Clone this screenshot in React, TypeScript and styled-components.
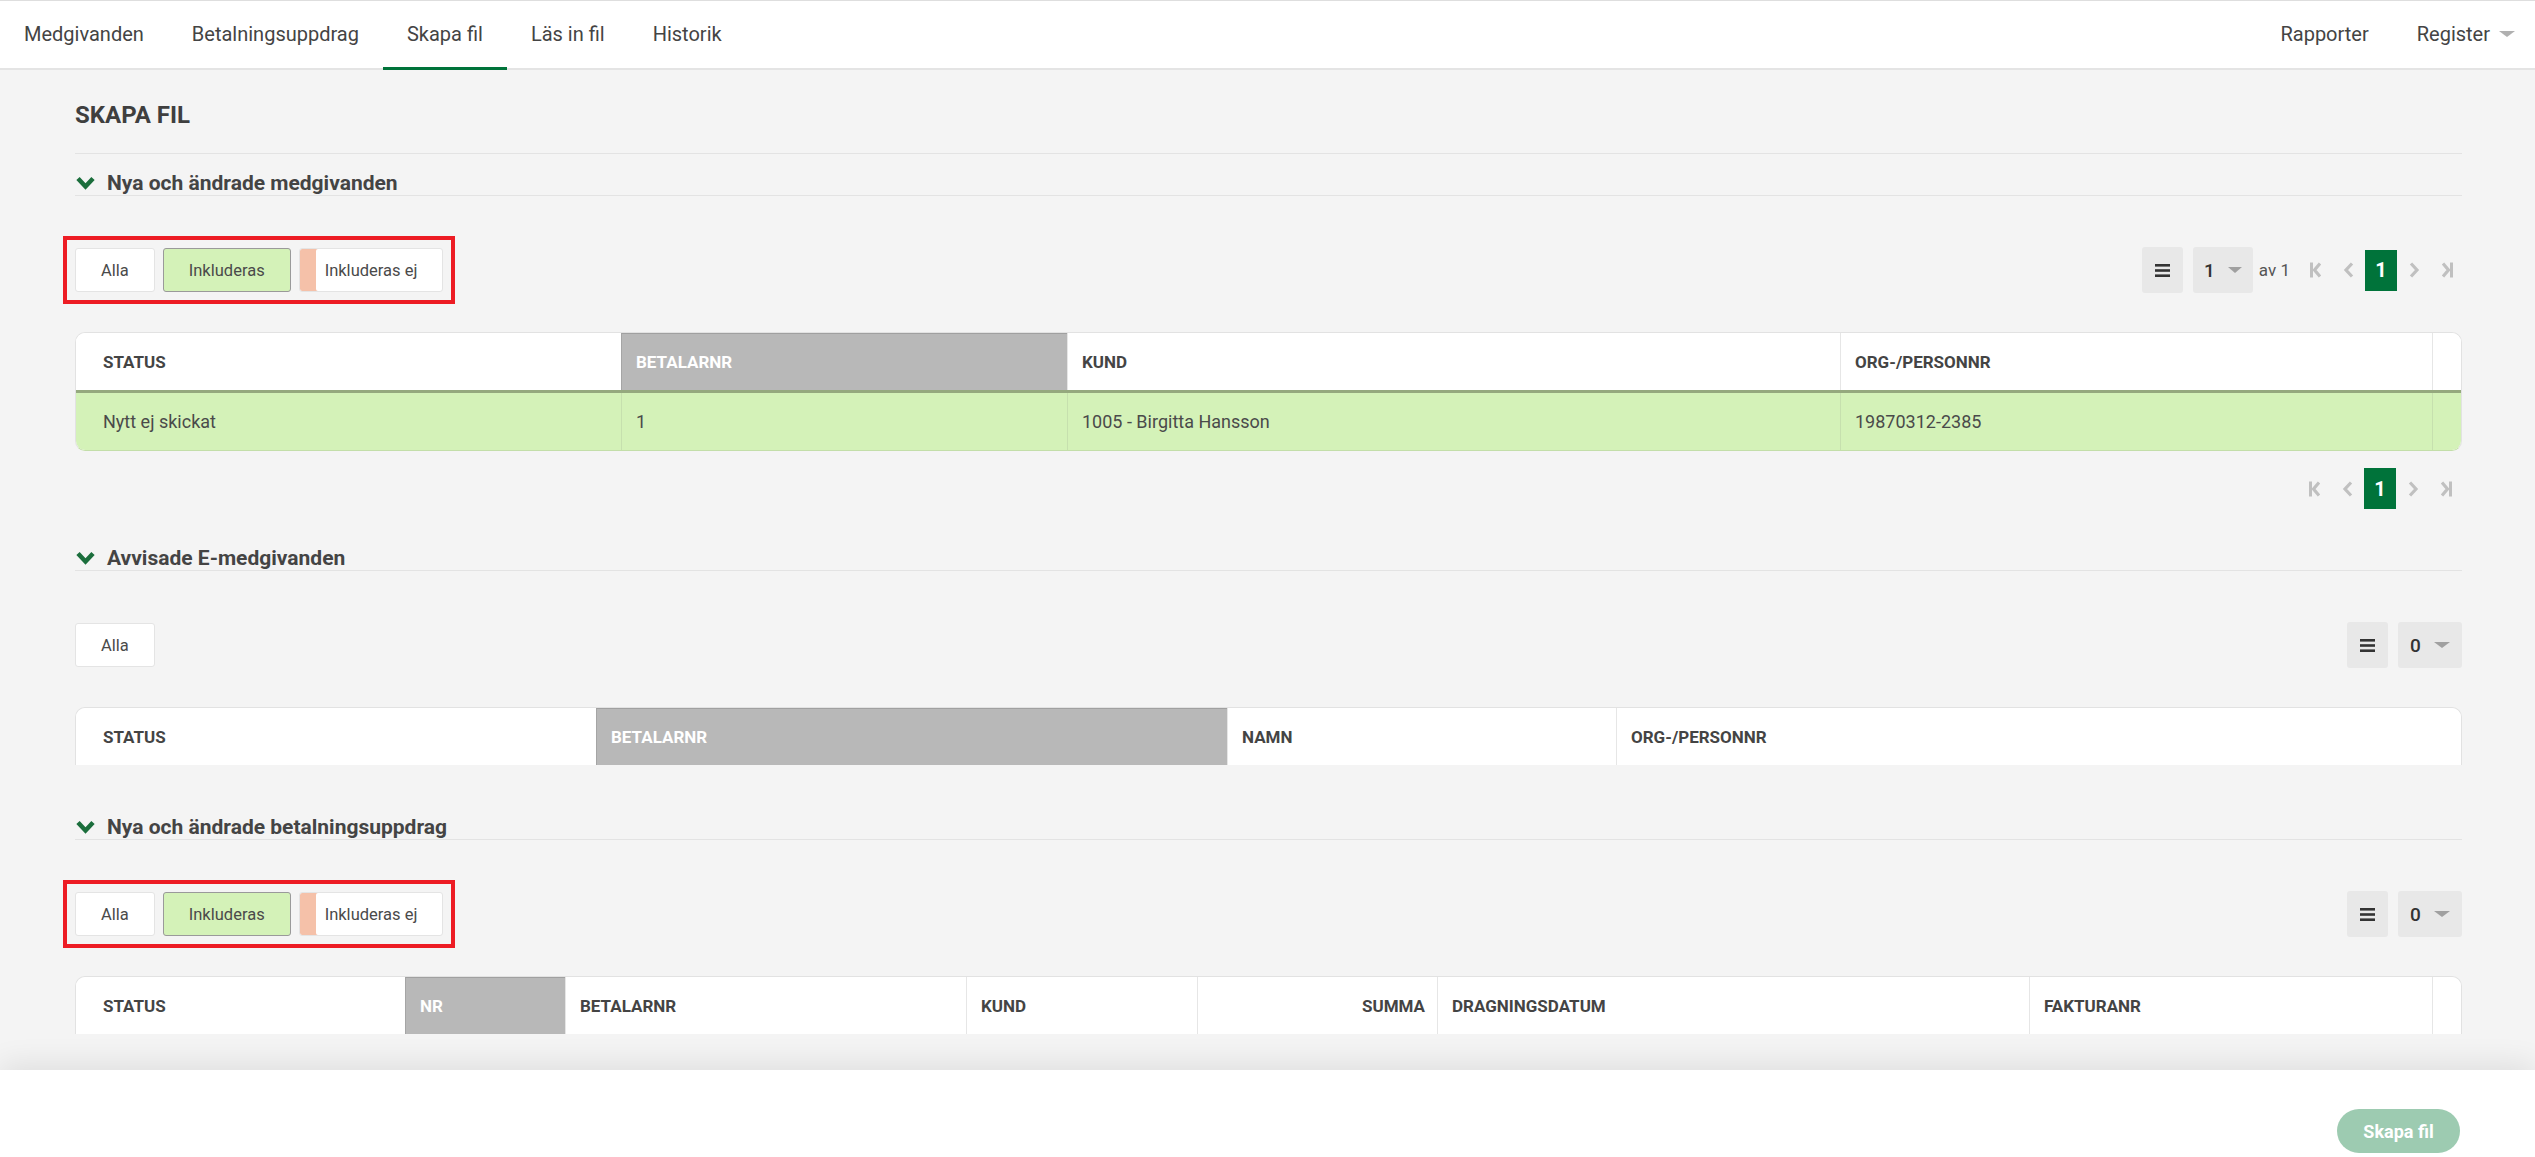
import React from "react";
import styled, { createGlobalStyle } from "styled-components";

const Global = createGlobalStyle`
  html, body { margin: 0; padding: 0; height: 100%; }
  body {
    background: #f4f4f4;
    font-family: Roboto, "Liberation Sans", sans-serif;
    color: #444;
    overflow: hidden;
  }
  #root { height: 100%; }
  * { box-sizing: border-box; }
`;

const Shell = styled.div`
  height: 100vh;
  display: flex;
  flex-direction: column;
`;

const TopBar = styled.header`
  height: 70px;
  flex-shrink: 0;
  background: #fff;
  border-top: 1px solid #dedede;
  border-bottom: 2px solid #e4e4e4;
  display: flex;
  justify-content: space-between;
  align-items: stretch;
`;

const NavGroup = styled.nav`
  display: flex;
  align-items: stretch;
`;

const NavTab = styled.a<{ $active?: boolean; $last?: boolean }>`
  display: flex;
  align-items: center;
  padding: 0 ${(p) => (p.$last ? "20px" : "24px")} 0 24px;
  margin-bottom: -2px;
  font-size: 20px;
  color: #444;
  text-decoration: none;
  border-bottom: 3px solid ${(p) => (p.$active ? "#00733a" : "transparent")};
  cursor: pointer;
`;

const Caret = styled.span<{ $size?: number; $color?: string }>`
  display: inline-block;
  width: 0;
  height: 0;
  border-left: ${(p) => (p.$size ?? 8)}px solid transparent;
  border-right: ${(p) => (p.$size ?? 8)}px solid transparent;
  border-top: ${(p) => Math.round((p.$size ?? 8) * 0.8)}px solid ${(p) => p.$color ?? "#a9a9a9"};
  margin-left: 9px;
`;

const Main = styled.main`
  flex: 1;
  overflow: hidden;
  padding: 0 73px 0 75px;
`;

const PageTitle = styled.h1`
  margin: 0;
  padding: 31px 0 24px;
  font-size: 24px;
  line-height: 28px;
  font-weight: 700;
  color: #3f3f3f;
  border-bottom: 1px solid #e3e3e3;
`;

const Section = styled.section<{ $top: number }>`
  margin-top: ${(p) => p.$top}px;
  display: flex;
  flex-direction: column;
`;

const SectionHeader = styled.h2`
  margin: 0;
  display: flex;
  align-items: center;
  gap: 12px;
  font-size: 21px;
  line-height: 24px;
  font-weight: 700;
  color: #444;
  border-bottom: 1px solid #e3e3e3;
  padding-left: 1px;
`;

const Toolbar = styled.div`
  margin-top: 51px;
  height: 46px;
  display: flex;
  align-items: center;
  justify-content: space-between;
`;

const FilterGroup = styled.div<{ $marked?: boolean }>`
  display: flex;
  gap: 8px;
  outline: ${(p) => (p.$marked ? "4px solid #ed1c24" : "none")};
  outline-offset: 8px;
`;

const FilterButton = styled.button<{ $variant?: "plain" | "on" | "off" }>`
  height: 44px;
  padding: 0 25px;
  font-family: Roboto, "Liberation Sans", sans-serif;
  font-size: 16.5px;
  color: #4a4a4a;
  border-radius: 3px;
  cursor: pointer;
  background: ${(p) => (p.$variant === "on" ? "#d4f2b8" : "#fff")};
  border: 1px solid ${(p) => (p.$variant === "on" ? "#9a9a9a" : "#e4e4e4")};
  box-shadow: ${(p) => (p.$variant === "off" ? "inset 16px 0 0 #f5c1a9" : "none")};
`;

const Controls = styled.div`
  display: flex;
  align-items: center;
  gap: 10px;
`;

const GreyButton = styled.button<{ $w: number }>`
  width: ${(p) => p.$w}px;
  height: 46px;
  border: none;
  border-radius: 3px;
  background: #e8e8e8;
  display: flex;
  align-items: center;
  justify-content: center;
  gap: 4px;
  font-family: Roboto, "Liberation Sans", sans-serif;
  font-size: 19px;
  font-weight: 500;
  color: #333;
  padding: 0;
`;

const PageOf = styled.span`
  font-size: 17px;
  color: #555;
  margin: 0 -1px 0 -4px;
`;

const Pager = styled.div<{ $standalone?: boolean }>`
  display: flex;
  align-items: center;
  gap: 1px;
  justify-content: flex-end;
  margin-top: ${(p) => (p.$standalone ? "17px" : "0")};
  margin-right: ${(p) => (p.$standalone ? "0" : "-1px")};
`;

const PageBtn = styled.span<{ $active?: boolean }>`
  width: 32px;
  height: 41px;
  display: flex;
  align-items: center;
  justify-content: center;
  background: ${(p) => (p.$active ? "#00733a" : "transparent")};
  color: ${(p) => (p.$active ? "#fff" : "#c0c0c0")};
  font-size: 20px;
  font-weight: 700;
`;

const Table = styled.div<{ $open?: boolean }>`
  margin-top: 39px;
  background: #fff;
  border: 1px solid #e2e2e2;
  border-bottom: ${(p) => (p.$open ? "none" : "1px solid #c3dea9")};
  border-radius: ${(p) => (p.$open ? "10px 10px 0 0" : "10px")};
  overflow: hidden;
`;

const Row = styled.div<{ $cols: string; $body?: boolean }>`
  display: grid;
  grid-template-columns: ${(p) => p.$cols};
  height: ${(p) => (p.$body ? "60px" : "57px")};
  background: ${(p) => (p.$body ? "#d4f2b8" : "#fff")};
  border-top: ${(p) => (p.$body ? "3px solid #95a97e" : "none")};
`;

const HeadCell = styled.div<{ $sorted?: boolean; $first?: boolean; $right?: boolean }>`
  display: flex;
  align-items: center;
  justify-content: ${(p) => (p.$right ? "flex-end" : "flex-start")};
  padding: 0 ${(p) => (p.$right ? "12px" : "14px")} 0 ${(p) => (p.$first ? "26px" : "14px")};
  font-size: 17px;
  font-weight: 700;
  text-transform: uppercase;
  color: ${(p) => (p.$sorted ? "#fff" : "#444")};
  background: ${(p) => (p.$sorted ? "#b8b8b8" : "transparent")};
  border-left: 1px solid ${(p) => (p.$first ? "transparent" : p.$sorted ? "#a5a5a5" : "#e6e6e6")};
  ${(p) => (p.$sorted ? "border-top: 1px solid #a0a0a0;" : "")}
`;

const BodyCell = styled.div<{ $first?: boolean }>`
  display: flex;
  align-items: center;
  padding: 0 14px 0 ${(p) => (p.$first ? "26px" : "14px")};
  font-size: 18px;
  color: #4a4a4a;
  border-left: 1px solid ${(p) => (p.$first ? "transparent" : "#c6e0ae")};
`;

const Footer = styled.footer`
  height: 87px;
  flex-shrink: 0;
  position: relative;
  z-index: 2;
  background: #fff;
  box-shadow: 0 -6px 30px rgba(0, 0, 0, 0.09);
  display: flex;
  justify-content: flex-end;
  align-items: flex-start;
  padding: 39px 75px 0 0;
`;

const PrimaryButton = styled.button`
  width: 123px;
  height: 44px;
  border: none;
  border-radius: 22px;
  background: #9dcbb1;
  color: #fff;
  font-family: Roboto, "Liberation Sans", sans-serif;
  font-size: 18px;
  font-weight: 700;
`;

/* icons */
const Chevron = () => (
  <svg width="19" height="14" viewBox="0 0 19 14">
    <path d="M2 2.5 L9.5 10.5 L17 2.5" fill="none" stroke="#1b6e3c" strokeWidth="4.5" />
  </svg>
);

const Hamburger = () => (
  <svg width="15" height="13" viewBox="0 0 15 13">
    <rect x="0" y="0" width="15" height="2.6" fill="#333" />
    <rect x="0" y="5.2" width="15" height="2.6" fill="#333" />
    <rect x="0" y="10.4" width="15" height="2.6" fill="#333" />
  </svg>
);

const FirstIcon = () => (
  <svg width="11" height="16" viewBox="0 0 11 16">
    <rect x="0" y="0.5" width="3" height="15" fill="currentColor" />
    <path d="M10 1.5 L4.5 8 L10 14.5" fill="none" stroke="currentColor" strokeWidth="3.2" />
  </svg>
);
const PrevIcon = () => (
  <svg width="11" height="16" viewBox="0 0 11 16">
    <path d="M9 1.5 L3 8 L9 14.5" fill="none" stroke="currentColor" strokeWidth="3.2" />
  </svg>
);
const NextIcon = () => (
  <svg width="11" height="16" viewBox="0 0 11 16">
    <path d="M2 1.5 L8 8 L2 14.5" fill="none" stroke="currentColor" strokeWidth="3.2" />
  </svg>
);
const LastIcon = () => (
  <svg width="11" height="16" viewBox="0 0 11 16">
    <path d="M1 1.5 L6.5 8 L1 14.5" fill="none" stroke="currentColor" strokeWidth="3.2" />
    <rect x="8" y="0.5" width="3" height="15" fill="currentColor" />
  </svg>
);

const PagerNav = ({ standalone }: { standalone?: boolean }) => (
  <Pager $standalone={standalone}>
    <PageBtn><FirstIcon /></PageBtn>
    <PageBtn><PrevIcon /></PageBtn>
    <PageBtn $active>1</PageBtn>
    <PageBtn><NextIcon /></PageBtn>
    <PageBtn><LastIcon /></PageBtn>
  </Pager>
);

type Col = { label: string; width: number | string; sorted?: boolean; right?: boolean };

const DataTable = ({ cols, rows, open }: { cols: Col[]; rows: string[][]; open?: boolean }) => {
  const template = cols.map((c) => (typeof c.width === "number" ? `${c.width}px` : c.width)).join(" ");
  return (
    <Table $open={open}>
      <Row $cols={template}>
        {cols.map((c, i) => (
          <HeadCell key={i} $first={i === 0} $sorted={c.sorted} $right={c.right}>
            {c.label}
          </HeadCell>
        ))}
      </Row>
      {rows.map((r, ri) => (
        <Row key={ri} $cols={template} $body>
          {cols.map((_, i) => (
            <BodyCell key={i} $first={i === 0}>{r[i] ?? ""}</BodyCell>
          ))}
        </Row>
      ))}
    </Table>
  );
};

const Filters = () => (
  <FilterGroup $marked>
    <FilterButton $variant="plain">Alla</FilterButton>
    <FilterButton $variant="on">Inkluderas</FilterButton>
    <FilterButton $variant="off">Inkluderas ej</FilterButton>
  </FilterGroup>
);

const SizeControls = ({ count }: { count: string }) => (
  <Controls>
    <GreyButton $w={41}><Hamburger /></GreyButton>
    <GreyButton $w={64}>
      {count}
      <Caret $size={8} $color="#a0a0a0" />
    </GreyButton>
  </Controls>
);

export default function App() {
  return (
    <Shell>
      <Global />
      <TopBar>
        <NavGroup>
          <NavTab>Medgivanden</NavTab>
          <NavTab>Betalningsuppdrag</NavTab>
          <NavTab $active>Skapa fil</NavTab>
          <NavTab>Läs in fil</NavTab>
          <NavTab>Historik</NavTab>
        </NavGroup>
        <NavGroup>
          <NavTab>Rapporter</NavTab>
          <NavTab $last>
            Register
            <Caret $size={8} $color="#b0b0b0" />
          </NavTab>
        </NavGroup>
      </TopBar>

      <Main>
        <PageTitle>SKAPA FIL</PageTitle>

        <Section $top={17}>
          <SectionHeader>
            <Chevron />
            Nya och ändrade medgivanden
          </SectionHeader>
          <Toolbar>
            <Filters />
            <Controls>
              <GreyButton $w={41}><Hamburger /></GreyButton>
              <GreyButton $w={60}>
                1
                <Caret $size={7} $color="#a0a0a0" />
              </GreyButton>
              <PageOf>av 1</PageOf>
              <PagerNav />
            </Controls>
          </Toolbar>
          <DataTable
            cols={[
              { label: "Status", width: 545 },
              { label: "Betalarnr", width: 446, sorted: true },
              { label: "Kund", width: 773 },
              { label: "Org-/Personnr", width: 592 },
              { label: "", width: "1fr" },
            ]}
            rows={[["Nytt ej skickat", "1", "1005 - Birgitta Hansson", "19870312-2385", ""]]}
          />
          <PagerNav standalone />
        </Section>

        <Section $top={37}>
          <SectionHeader>
            <Chevron />
            Avvisade E-medgivanden
          </SectionHeader>
          <Toolbar>
            <FilterGroup>
              <FilterButton $variant="plain">Alla</FilterButton>
            </FilterGroup>
            <SizeControls count="0" />
          </Toolbar>
          <DataTable
            open
            cols={[
              { label: "Status", width: 520 },
              { label: "Betalarnr", width: 631, sorted: true },
              { label: "Namn", width: 389 },
              { label: "Org-/Personnr", width: "1fr" },
            ]}
            rows={[]}
          />
        </Section>

        <Section $top={50}>
          <SectionHeader>
            <Chevron />
            Nya och ändrade betalningsuppdrag
          </SectionHeader>
          <Toolbar>
            <Filters />
            <SizeControls count="0" />
          </Toolbar>
          <DataTable
            open
            cols={[
              { label: "Status", width: 329 },
              { label: "Nr", width: 160, sorted: true },
              { label: "Betalarnr", width: 401 },
              { label: "Kund", width: 231 },
              { label: "Summa", width: 240, right: true },
              { label: "Dragningsdatum", width: 592 },
              { label: "Fakturanr", width: 403 },
              { label: "", width: "1fr" },
            ]}
            rows={[]}
          />
        </Section>
      </Main>

      <Footer>
        <PrimaryButton>Skapa fil</PrimaryButton>
      </Footer>
    </Shell>
  );
}
